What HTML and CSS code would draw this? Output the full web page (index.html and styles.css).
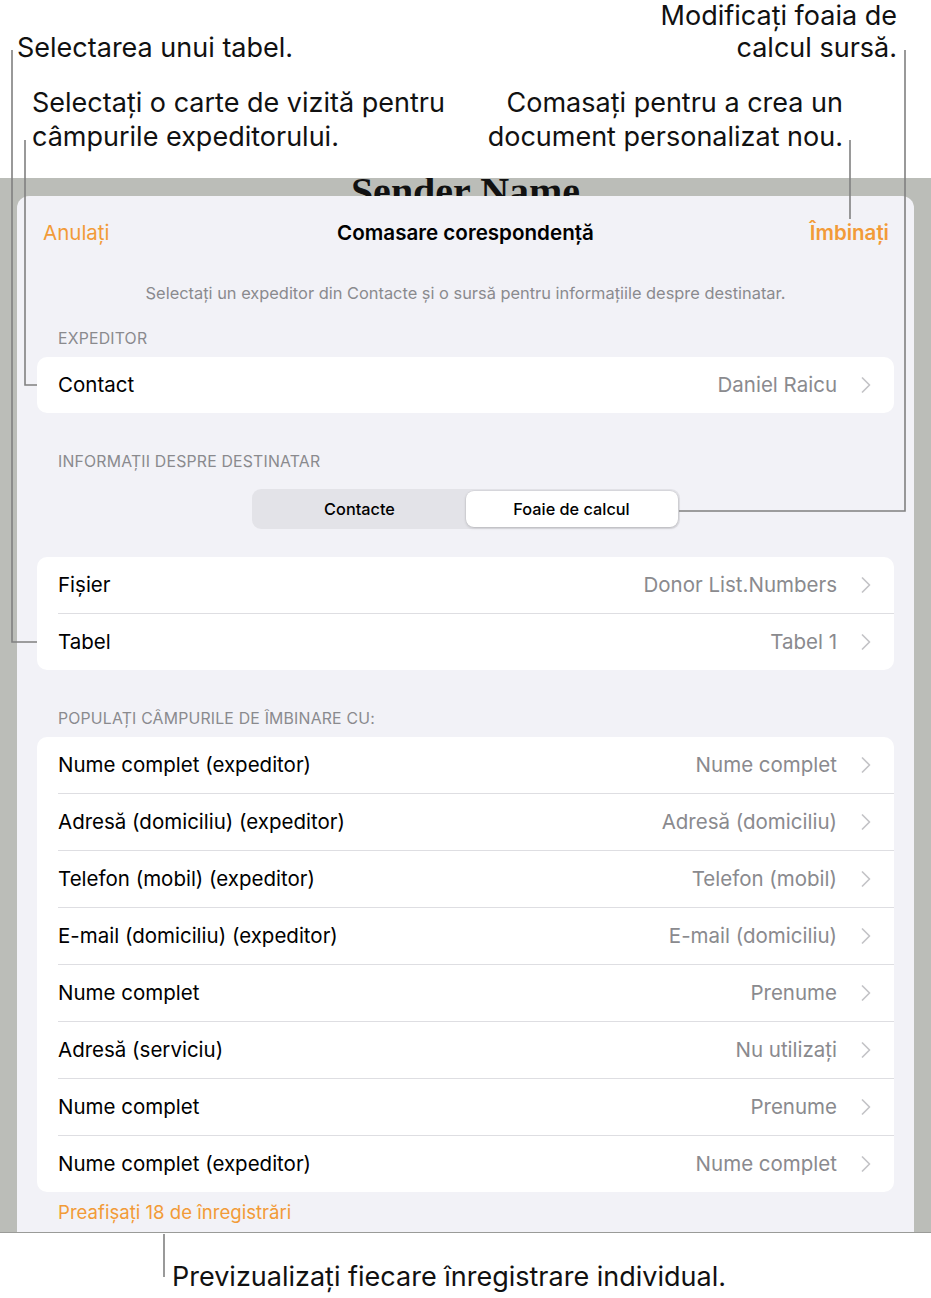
FILE: index.html
```html
<!DOCTYPE html>
<html lang="ro">
<head>
  <meta charset="UTF-8" />
  <meta name="viewport" content="width=device-width, initial-scale=1" />
  <title>Comasare corespondență</title>
  <link rel="stylesheet" href="styles.css">
</head>
<body>
<div class="page">

  <!-- Callouts above the screen -->
  <div class="top-notes">
    <div class="notes-left">
      <p class="note note-table">Selectarea unui tabel.</p>
      <p class="note note-card">Selectați o carte de vizită pentru<br>câmpurile expeditorului.</p>
    </div>
    <div class="notes-right">
      <p class="note note-sheet">Modificați foaia de<br>calcul sursă.</p>
      <p class="note note-merge">Comasați pentru a crea un<br>document personalizat nou.</p>
    </div>
  </div>

  <!-- Device screen -->
  <div class="screen">
    <div class="behind-title"><span>Sender Name</span></div>

    <div class="sheet">
      <div class="navbar">
        <a class="nav-cancel">Anulați</a>
        <div class="nav-title">Comasare corespondență</div>
        <a class="nav-merge">Îmbinați</a>
      </div>

      <p class="intro">Selectați un expeditor din Contacte și o sursă pentru informațiile despre destinatar.</p>

      <div class="section-label first">EXPEDITOR</div>
      <div class="group" id="sender"></div>

      <div class="section-label">INFORMAȚII DESPRE DESTINATAR</div>
      <div class="segmented">
        <div class="seg">Contacte</div>
        <div class="seg active">Foaie de calcul</div>
      </div>

      <div class="group spaced" id="source"></div>

      <div class="section-label">POPULAȚI CÂMPURILE DE ÎMBINARE CU:</div>
      <div class="group" id="fields"></div>

      <div class="preview-link">Preafișați 18 de înregistrări</div>
    </div>
  </div>

  <p class="note note-preview">Previzualizați fiecare înregistrare individual.</p>

  <!-- Leader lines -->
  <svg class="leaders" width="931" height="1298" viewBox="0 0 931 1298">
    <polyline points="12,50 12,642 37,642" />
    <polyline points="25,140 25,385 37,385" />
    <polyline points="905,50 905,511 679,511" />
    <polyline points="850,140 850,219" />
    <polyline points="164,1234 164,1277" />
  </svg>
</div>

<script>
  const sender = [['Contact', 'Daniel Raicu']];
  const source = [['Fișier', 'Donor List.Numbers'], ['Tabel', 'Tabel 1']];
  const fields = [
    ['Nume complet (expeditor)', 'Nume complet'],
    ['Adresă (domiciliu) (expeditor)', 'Adresă (domiciliu)'],
    ['Telefon (mobil) (expeditor)', 'Telefon (mobil)'],
    ['E-mail (domiciliu) (expeditor)', 'E-mail (domiciliu)'],
    ['Nume complet', 'Prenume'],
    ['Adresă (serviciu)', 'Nu utilizați'],
    ['Nume complet', 'Prenume'],
    ['Nume complet (expeditor)', 'Nume complet']
  ];

  function renderRows(id, rows) {
    const list = document.getElementById(id);
    rows.forEach(([label, value]) => {
      const row = document.createElement('div');
      row.className = 'row';
      row.innerHTML = `
        <span class="row-label">${label}</span>
        <span class="row-value">${value}</span>
        <svg class="chev" width="10" height="16" viewBox="0 0 10 16"><polyline points="1.5,1 8.5,8 1.5,15" /></svg>
      `;
      list.appendChild(row);
    });
  }

  renderRows('sender', sender);
  renderRows('source', source);
  renderRows('fields', fields);
</script>
</body>
</html>
```

FILE: styles.css
```css
* {
  box-sizing: border-box;
}
body {
  margin: 0;
  background: #fff;
  font-family: Inter, "Noto Sans", sans-serif;
  color: #000;
}
.page {
  position: relative;
  width: 931px;
  height: 1298px;
  overflow: hidden;
}
p {
  margin: 0;
}

/* callouts */
.top-notes {
  display: flex;
  justify-content: space-between;
  height: 178px;
}
.note {
  font-size: 27px;
  line-height: 34px;
  color: #111;
}
.notes-left {
  display: flex;
  flex-direction: column;
}
.note-table {
  margin: 31px 0 0 17px;
}
.note-card {
  margin: 21px 0 0 32px;
}
.notes-right {
  display: flex;
  flex-direction: column;
  align-items: flex-end;
  text-align: right;
}
.note-sheet {
  margin: 0 34px 0 0;
  line-height: 32px;
}
.note-merge {
  margin: 22px 88px 0 0;
}
.note-preview {
  margin: 27px 0 0 172px;
}

/* screen */
.screen {
  background: #bbbdb8;
  height: 1055px;
  border-bottom: 1px solid #9a9b98;
  display: flex;
  flex-direction: column;
}
.behind-title {
  height: 18px;
  overflow: hidden;
  text-align: center;
  font-family: "Liberation Serif", serif;
  font-weight: bold;
  font-size: 40px;
  line-height: 28px;
  color: #111;
}
.sheet {
  flex: 1;
  margin: 0 17px;
  background: #f2f2f7;
  border-radius: 12px 12px 0 0;
  padding: 0 20px;
}

.navbar {
  display: grid;
  grid-template-columns: 1fr auto 1fr;
  align-items: center;
  height: 72px;
  font-size: 20.5px;
}
.nav-cancel {
  color: #f29b38;
  padding-left: 6px;
}
.nav-title {
  font-weight: 600;
  font-size: 20.6px;
}
.nav-merge {
  color: #f29b38;
  font-weight: 600;
  text-align: right;
  padding-right: 5px;
}

.intro {
  margin-top: 15px;
  text-align: center;
  font-size: 16.4px;
  line-height: 20px;
  color: #8a8a8e;
}

.section-label {
  margin: 40px 0 9px 21px;
  font-size: 15.8px;
  line-height: 18px;
  color: #8a8a8e;
  letter-spacing: 0.2px;
}
.section-label.first {
  margin-top: 27px;
}

.group {
  background: #fff;
  border-radius: 10px;
  overflow: hidden;
}
.group.spaced {
  margin-top: 28px;
}
.row {
  display: flex;
  align-items: center;
  height: 56px;
  padding: 0 21px 0 21px;
  font-size: 20.5px;
  line-height: 24px;
}
.row + .row {
  height: 57px;
  border-top: 1px solid #dedee2;
  margin-left: 21px;
  padding-left: 0;
}
.row-label {
  flex: 1;
}
.row-value {
  color: #8a8a8e;
}
.chev {
  margin-left: 24px;
  margin-right: 2px;
}
.chev polyline {
  fill: none;
  stroke: #c4c4c7;
  stroke-width: 1.7;
  stroke-linecap: round;
  stroke-linejoin: round;
}

.segmented {
  display: flex;
  width: 428px;
  margin: 18px auto 0;
  padding: 2px;
  background: #e3e3e8;
  border-radius: 9px;
}
.seg {
  flex: 1;
  height: 36px;
  line-height: 36px;
  text-align: center;
  font-size: 16.3px;
  font-weight: 500;
}
.seg.active {
  background: #fff;
  border-radius: 8px;
  box-shadow: 0 1px 3px rgba(0,0,0,0.18), 0 0 0 0.5px rgba(0,0,0,0.06);
}

.preview-link {
  margin: 10px 0 0 21px;
  font-size: 18.6px;
  line-height: 20px;
  color: #f29b38;
}

/* annotation lines */
.leaders {
  position: absolute;
  top: 0;
  left: 0;
  pointer-events: none;
}
.leaders polyline {
  fill: none;
  stroke: #808080;
  stroke-width: 1.6;
}
```
